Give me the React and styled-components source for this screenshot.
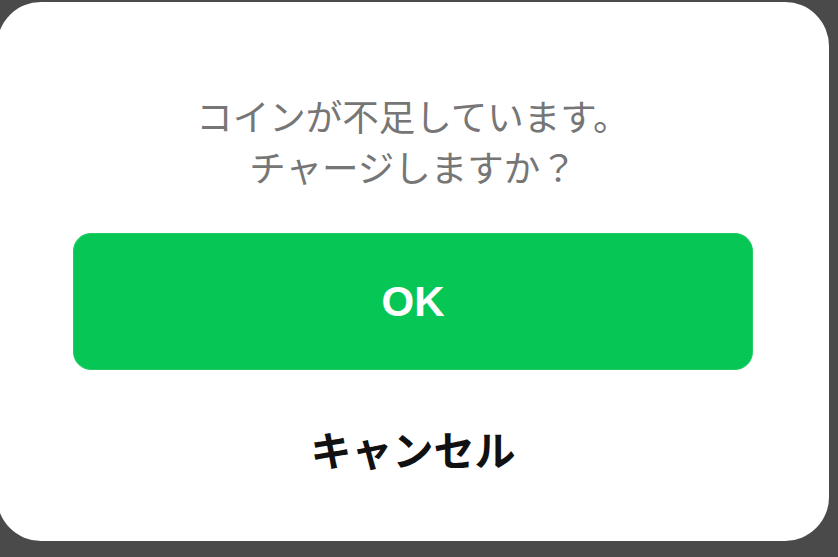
import styled, { createGlobalStyle } from "styled-components";

const GlobalStyle = createGlobalStyle`
  html, body {
    margin: 0;
    padding: 0;
    background: #4a4a4a;
  }
  body {
    font-family: "Noto Sans CJK JP", "Noto Sans", sans-serif;
    overflow: hidden;
  }
`

const Screen = styled.div`
  width: 838px;
  height: 557px;
  padding-top: 2px;
  box-sizing: border-box;
  overflow: hidden;
`

const Dialog = styled.div`
  width: 832px;
  height: 539px;
  margin-left: -3px;
  box-sizing: border-box;
  background: #ffffff;
  border-radius: 44px;
  padding: 88px 76px 0;
  display: flex;
  flex-direction: column;
  align-items: center;
`

const Message = styled.p`
  margin: 0;
  text-align: center;
  font-size: 36.5px;
  line-height: 51px;
  color: #767676;
`

const OkButton = styled.button`
  margin-top: 41px;
  width: 680px;
  height: 137px;
  border: 1px solid #22cc63;
  border-radius: 18px;
  background: #06c755;
  color: #ffffff;
  font-family: "Liberation Sans", Arial, sans-serif;
  font-weight: 700;
  font-size: 42px;
  cursor: pointer;
`

const CancelButton = styled.button`
  margin-top: 48px;
  border: none;
  background: none;
  padding: 0;
  height: 60px;
  line-height: 60px;
  font-family: "Noto Sans CJK JP", "Noto Sans", sans-serif;
  font-weight: 700;
  font-size: 41px;
  color: #111111;
  cursor: pointer;
`

export default function App() {
  return (
    <>
      <GlobalStyle />
      <Screen>
        <Dialog>
          <Message>
            コインが不足しています。
            <br />
            チャージしますか？
          </Message>
          <OkButton>OK</OkButton>
          <CancelButton>キャンセル</CancelButton>
        </Dialog>
      </Screen>
    </>
  )
}
